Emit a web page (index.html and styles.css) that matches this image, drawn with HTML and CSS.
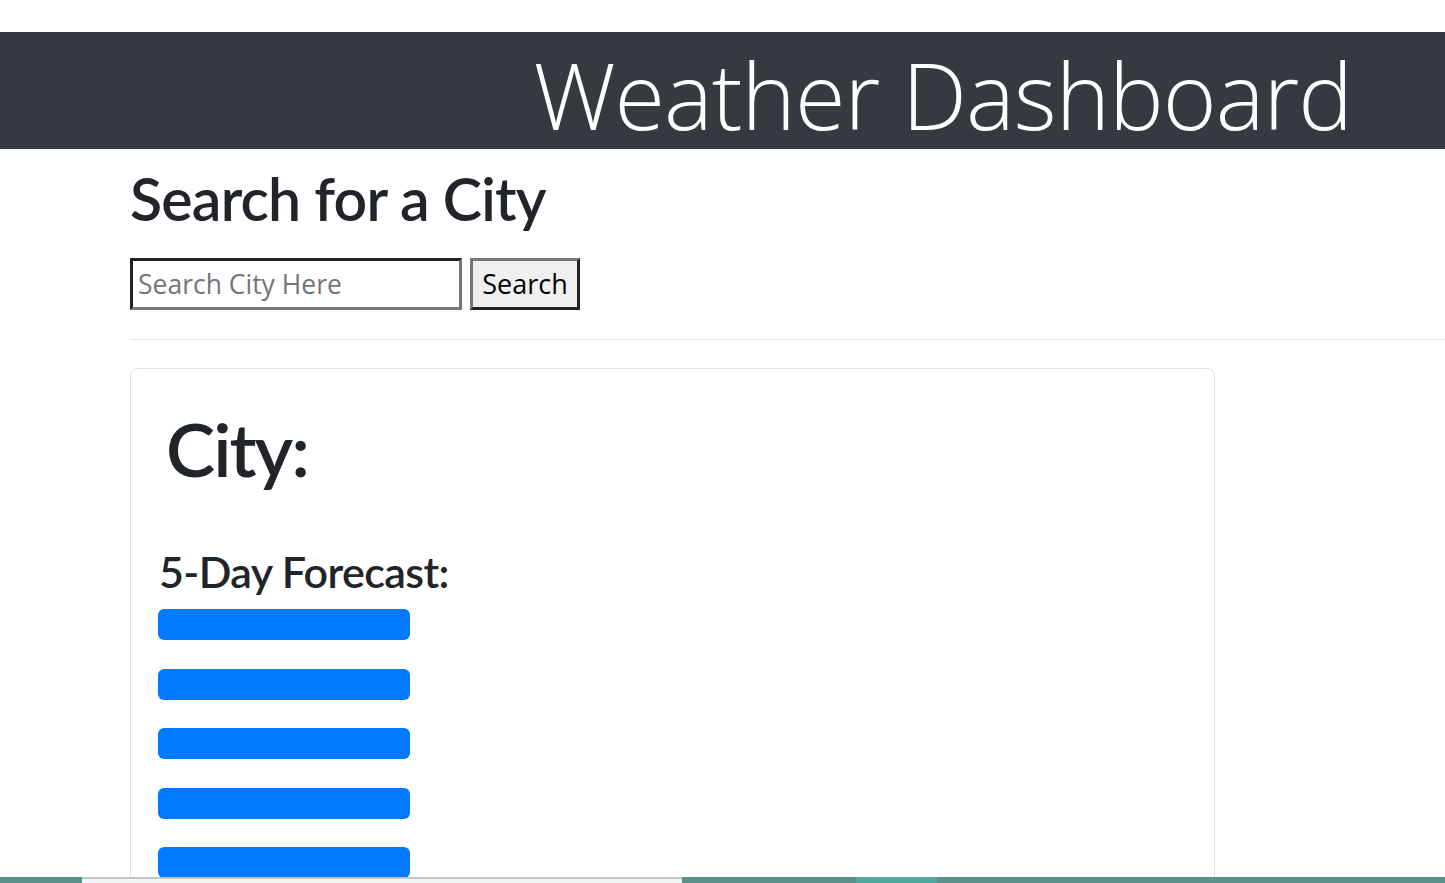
FILE: index.html
```
<!DOCTYPE html>
<html lang="en">
<head>
<meta charset="utf-8">
<title>Weather Dashboard</title>
<link rel="stylesheet" href="styles.css">
</head>
<body>
<header class="topbar">
  <h1 class="brand">Weather Dashboard</h1>
</header>
<main class="page">
  <section class="search">
    <h2 class="search-title">Search for a City</h2>
    <form class="search-form">
      <input class="search-input" type="text" placeholder="Search City Here">
      <button class="search-btn" type="button">Search</button>
    </form>
  </section>
  <hr class="divider">
  <section class="card">
    <h2 class="city">City:</h2>
    <h3 class="forecast-title">5-Day Forecast:</h3>
    <div class="days">
      <div class="day"></div>
      <div class="day"></div>
      <div class="day"></div>
      <div class="day"></div>
      <div class="day"></div>
    </div>
  </section>
</main>
<div class="taskbar">
  <div class="tb-seg tb-a"></div>
  <div class="tb-seg tb-search"></div>
  <div class="tb-seg tb-b"></div>
  <div class="tb-seg tb-active"></div>
  <div class="tb-seg tb-c"></div>
</div>
</body>
</html>
```
FILE: styles.css
```
* { box-sizing: border-box; }
html, body { margin: 0; padding: 0; }
body {
  font-family: "Open Sans", "Noto Sans", sans-serif;
  color: #212529;
  background: #fff;
  overflow: hidden;
  height: 883px;
}
.topbar {
  margin-top: 32px;
  height: 117px;
  background: #343a40;
  display: flex;
  justify-content: flex-end;
  align-items: flex-start;
  padding: 9px 93px 0 0;
}
.brand {
  margin: 0;
  color: #fff;
  font-weight: 300;
  font-size: 92px;
  line-height: 108px;
  letter-spacing: -1px;
  white-space: nowrap;
}
.page {
  padding-left: 130px;
}
.search-title,
.city,
.forecast-title {
  font-family: "Lato", "Open Sans", sans-serif;
}
.search-title {
  margin: 15px 0 0;
  font-size: 59px;
  font-weight: 600;
  line-height: 1.2;
  letter-spacing: -0.8px;
}
.search-form {
  margin-top: 23px;
  display: flex;
  gap: 8px;
  height: 52px;
}
.search-input {
  width: 332px;
  height: 52px;
  border: 3px solid;
  border-color: #222 #767676 #767676 #222;
  padding: 0 5px;
  font-family: inherit;
  font-size: 26.5px;
  color: #212529;
  background: #fff;
  outline: none;
}
.search-input::placeholder { color: #757575; }
.search-btn {
  width: 110px;
  height: 52px;
  border: 3px solid;
  border-color: #767676 #222 #222 #767676;
  background: #efefef;
  font-family: inherit;
  font-size: 27px;
  color: #000;
  padding: 0;
}
.divider {
  margin: 29px 0 0;
  border: 0;
  border-top: 1px solid #e5e5e5;
  height: 0;
}
.card {
  margin-top: 28px;
  width: 1085px;
  height: 700px;
  border: 1px solid #dfdfdf;
  border-radius: 8px;
  padding: 0 0 0 27px;
}
.city {
  margin: 36px 0 0 8px;
  font-size: 74px;
  font-weight: 600;
  line-height: 1.2;
  letter-spacing: -2px;
}
.forecast-title {
  margin: 52px 0 0 1px;
  font-size: 43px;
  font-weight: 600;
  line-height: 1.2;
  letter-spacing: -0.6px;
}
.days {
  margin-top: 12px;
  display: flex;
  flex-direction: column;
  gap: 28.5px;
}
.day {
  width: 252px;
  height: 31px;
  background: #007bff;
  border-radius: 6px;
}
.taskbar {
  position: fixed;
  left: 0;
  right: 0;
  bottom: 0;
  height: 6px;
  display: flex;
}
.tb-seg { height: 100%; }
.tb-a { width: 82px; background: #5a918a; }
.tb-search { width: 600px; background: #f3f6f6; border-top: 2px solid #c2c5c5; }
.tb-b { width: 174px; background: #5a918a; }
.tb-active { width: 81px; background: #4fa9a0; }
.tb-c { flex: 1; background: #5a918a; }
```
